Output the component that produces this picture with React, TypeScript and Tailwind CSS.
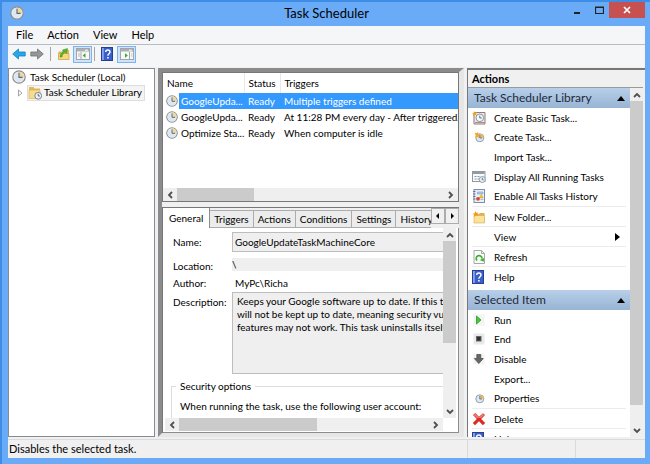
import type { ReactNode } from 'react';

type IconProps = { className?: string };

function ClockIcon({ className = 'w-3.5 h-3.5' }: IconProps) {
  return (
    <svg viewBox="0 0 14 14" className={className}>
      <circle cx="7" cy="7" r="6.2" fill="#eef1f4" stroke="#8d8d8d" strokeWidth="1.2" />
      <circle cx="7" cy="7" r="4.9" fill="#dbe7f2" />
      <path d="M7 7V2.1A4.9 4.9 0 0 1 11.9 7z" fill="#f3d694" />
      <path d="M7 2.8V7.4H10.6" fill="none" stroke="#5c6874" strokeWidth="1.1" />
    </svg>
  );
}

function SmallClockIcon({ orange = false }: { orange?: boolean }) {
  return (
    <svg viewBox="0 0 14 14" className="w-3.5 h-3.5">
      <circle cx="7.8" cy="7.8" r="4" fill="#dfe8ef" stroke="#8fa1b0" />
      <path d="M7.8 7.8V4a3.8 3.8 0 0 1 3.8 3.8z" fill="#f2b84e" />
      <path d="M7.8 5V8H10" fill="none" stroke="#54789a" strokeWidth="0.9" />
      {orange && <path d="M2.5 2.5l2 .8L6 2l.4 2 2 .6-1.7 1L7 8 5.2 6.8 3.2 7.8 3.7 5.6z" fill="#f5a623" />}
    </svg>
  );
}

function FolderIcon() {
  return (
    <svg viewBox="0 0 14 14" className="w-3.5 h-3.5 shrink-0">
      <path d="M1 1h4.5l1 1.5H12V12H1z" fill="#e3b95a" />
      <path d="M1 4h11v8.5H1z" fill="#f8dc8e" stroke="#d9ab48" strokeWidth="0.6" />
      <circle cx="10.2" cy="9.8" r="3.4" fill="#eef3f7" stroke="#6d7a86" strokeWidth="0.9" />
      <path d="M10.2 7.8v2.2H12" fill="none" stroke="#4b5d6e" strokeWidth="0.9" />
    </svg>
  );
}

function NewFolderIcon() {
  return (
    <svg viewBox="0 0 14 14" className="w-3.5 h-3.5">
      <path d="M2 4h5l1-1h4.5v10H2z" fill="#dfb04d" />
      <path d="M2 5.5h10.5V13H2z" fill="#fae39b" stroke="#d9ab48" strokeWidth="0.6" />
      <path d="M3.5 1l.8 1.8 2.2-.3-1.2 1.7.9 1.8L4 5.5 2.3 6.8l-.1-2L.5 4l2-.8z" fill="#f59a1c" />
    </svg>
  );
}

function UpFolderIcon() {
  return (
    <svg viewBox="0 0 14 14" className="w-3.5 h-3.5">
      <path d="M1.5 4.5h4l1-1.5H12v9.5H1.5z" fill="#e2b54e" />
      <path d="M1.5 6.5H12v6H1.5z" fill="#f7d77f" stroke="#c9993a" strokeWidth="0.6" />
      <path d="M3 10c.2-3 1.5-4.3 3.5-5L5.5 3l5-1.5-1 5-1-1.4C6.5 6 5.3 7.5 5 10z" fill="#4fb82c" stroke="#3a8f20" strokeWidth="0.5" />
    </svg>
  );
}

function ArrowIcon({ forward = false }: { forward?: boolean }) {
  return (
    <svg viewBox="0 0 14 12" className="w-3.5 h-3">
      {forward ? (
        <path d="M.8 4h6.7V1l5.8 5-5.8 5V8H.8z" fill="#969696" stroke="#727272" strokeWidth="0.8" />
      ) : (
        <path d="M13.2 4H6.5V1L.7 6l5.8 5V8h6.7z" fill="#27a8ea" stroke="#1b7fc0" strokeWidth="0.8" />
      )}
    </svg>
  );
}

function PaneIcon({ right = false }: { right?: boolean }) {
  return (
    <svg viewBox="0 0 14 12" className="w-3.5 h-3">
      <rect x="0.5" y="0.5" width="13" height="11" fill="#f7f7f7" stroke="#a3a6a9" />
      <path d="M1 1h12v2.5H1z" fill="#aab0b6" />
      <path d="M9 2.2h3" stroke="#fff" />
      <path d={right ? 'M9.5 4v7.5' : 'M5 4v7.5'} stroke="#a3a6a9" />
      <path d={right ? 'M11 6h1.5M11 8h1.5' : 'M2 6h2M2 8h2'} stroke="#b5babf" />
      <path d={right ? 'M5 5.3v4.4l2.8-2.2z' : 'M9.5 5.3v4.4L6.7 7.5z'} fill="#3aa535" />
    </svg>
  );
}

function HelpIcon() {
  return (
    <svg viewBox="0 0 12 14" className="w-3 h-3.5">
      <rect x="0.5" y="0.5" width="11" height="13" fill="#3a5fcd" stroke="#24408f" />
      <path d="M1 1h1.8v12H1z" fill="#8aa4ea" />
      <path d="M4.7 5c0-2.6 4.3-2.6 4.3 0 0 1.8-2.1 1.8-2.1 3.7" fill="none" stroke="#fff" strokeWidth="1.4" />
      <path d="M6.1 10h1.6v1.6H6.1z" fill="#fff" />
    </svg>
  );
}

function BasicTaskIcon() {
  return (
    <svg viewBox="0 0 14 14" className="w-3.5 h-3.5">
      <path d="M2 1.5h11V13H2z" fill="#eee9e4" stroke="#8d7f7c" />
      <path d="M3 11.5h10" stroke="#b58d83" />
      <circle cx="7.8" cy="6.8" r="3.8" fill="#f7fafc" stroke="#7f8b95" strokeWidth="0.9" />
      <path d="M7.8 4.5V7h2" fill="none" stroke="#47637b" strokeWidth="0.9" />
      <path d="M2.5 0l.7 1.6L5 1.3 4 2.9l.9 1.5-2-.4-1.4 1.2-.1-1.9L0 2.4l1.8-.5z" fill="#f5a01c" />
    </svg>
  );
}

function RunningIcon() {
  return (
    <svg viewBox="0 0 14 14" className="w-3.5 h-3.5">
      <rect x="0.5" y="1.5" width="12.5" height="10" fill="#fafafa" stroke="#93989c" />
      <path d="M1 2h11.5v2H1z" fill="#8f9ba6" />
      <path d="M2.5 6.5h2M5.5 6.5h2M2.5 9h2M5.5 9h2" stroke="#8698a8" />
      <circle cx="10.3" cy="9.5" r="3" fill="#e9f1f7" stroke="#8796a3" strokeWidth="0.9" />
      <path d="M10.3 7.8v2h1.4" fill="none" stroke="#47637b" strokeWidth="0.8" />
    </svg>
  );
}

function HistoryIcon() {
  return (
    <svg viewBox="0 0 14 14" className="w-3.5 h-3.5">
      <rect x="2" y="0.5" width="10.5" height="13" fill="#eaf0f8" stroke="#7c8db0" />
      <path d="M1 2.5h2.5M1 5h2.5M1 7.5h2.5M1 10h2.5" stroke="#5a6fa0" strokeWidth="0.9" />
      <path d="M5.5 3h5.5v2H5.5zM8.5 10.5h3" fill="#b9cbe6" stroke="#7c98c4" strokeWidth="0.6" />
      <path d="M9.3 5.5l2 3.5h-4z" fill="#f5c21c" stroke="#c9961a" strokeWidth="0.4" />
      <circle cx="6" cy="9.8" r="1.9" fill="#d9442e" />
    </svg>
  );
}

function RefreshIcon() {
  return (
    <svg viewBox="0 0 14 14" className="w-3.5 h-3.5">
      <path d="M2 .5h7.5l3 3v10H2z" fill="#fbfbfb" stroke="#a5a9ac" />
      <path d="M9.5.5v3h3" fill="none" stroke="#a5a9ac" />
      <path d="M5 10.5A2.9 2.9 0 1 1 10 8.5" fill="none" stroke="#35b027" strokeWidth="1.7" />
      <path d="M11.9 8v3.8L7.8 10z" fill="#35b027" />
    </svg>
  );
}

function RunIcon() {
  return (
    <svg viewBox="0 0 14 14" className="w-3.5 h-3.5">
      <rect x="1.5" y="1.5" width="11" height="11" fill="#f4f4f4" />
      <path d="M4.5 3L9 7l-4.5 4z" fill="#47c73a" stroke="#2c9a25" strokeWidth="0.8" />
    </svg>
  );
}

function EndIcon() {
  return (
    <svg viewBox="0 0 14 14" className="w-3.5 h-3.5">
      <rect x="1.5" y="1.5" width="11" height="11" fill="#e9e9e9" />
      <rect x="4.5" y="4.5" width="4.5" height="4.5" fill="#2e2e2e" stroke="#666" />
    </svg>
  );
}

function DisableIcon() {
  return (
    <svg viewBox="0 0 14 14" className="w-3.5 h-3.5">
      <rect x="1.5" y="1.5" width="11" height="11" fill="#f4f4f4" />
      <path d="M4.8 2.5h4v4h2.5l-4.5 5-4.5-5h2.5z" fill="#666" stroke="#484848" strokeWidth="0.7" />
    </svg>
  );
}

function DeleteIcon() {
  return (
    <svg viewBox="0 0 14 14" className="w-3.5 h-3.5">
      <path d="M1 3l2.300-2L7 4.700l4-3.500 2 1.700L9.200 7l4 4-2.400 2.200L7 9.300l-4 3.900L.8 11l4-4z" fill="#de2b22" />
      <path d="M1.5 3l1.8-1.5L7 5.300l4-3.500 1.300 1.100L9 6H5z" fill="#ec7a74" />
    </svg>
  );
}

type Action = { label: string; icon?: ReactNode; submenu?: boolean };

const libraryActions: Action[] = [
  { label: 'Create Basic Task...', icon: <BasicTaskIcon /> },
  { label: 'Create Task...', icon: <SmallClockIcon orange /> },
  { label: 'Import Task...' },
  { label: 'Display All Running Tasks', icon: <RunningIcon /> },
  { label: 'Enable All Tasks History', icon: <HistoryIcon /> },
];

const libraryExtras: Action[] = [
  { label: 'New Folder...', icon: <NewFolderIcon /> },
  { label: 'View', submenu: true },
  { label: 'Refresh', icon: <RefreshIcon /> },
  { label: 'Help', icon: <HelpIcon /> },
];

const itemActions: Action[] = [
  { label: 'Run', icon: <RunIcon /> },
  { label: 'End', icon: <EndIcon /> },
  { label: 'Disable', icon: <DisableIcon /> },
  { label: 'Export...' },
  { label: 'Properties', icon: <SmallClockIcon /> },
];

const itemExtras: Action[] = [
  { label: 'Delete', icon: <DeleteIcon /> },
  { label: 'Help', icon: <HelpIcon /> },
];

const tasks = [
  { name: 'GoogleUpda...', status: 'Ready', triggers: 'Multiple triggers defined', selected: true },
  { name: 'GoogleUpda...', status: 'Ready', triggers: 'At 11:28 PM every day - After triggered, repeat' },
  { name: 'Optimize Sta...', status: 'Ready', triggers: 'When computer is idle' },
];

const tabs = ['General', 'Triggers', 'Actions', 'Conditions', 'Settings', 'History'];

const description = `Keeps your Google software up to date. If this task
will not be kept up to date, meaning security vulnerabilities
features may not work. This task uninstalls itself`;

function Chevron({ d }: { d: string }) {
  return (
    <svg viewBox="0 0 8 8" className="w-2 h-2">
      <path d={d} fill="none" stroke="#505050" strokeWidth="1.8" />
    </svg>
  );
}

function VScroll({ thumb }: { thumb: string }) {
  return (
    <div className="flex w-[13px] shrink-0 flex-col bg-[#efefef]">
      <button aria-label="Scroll up" className="flex h-[13px] shrink-0 items-center justify-center">
        <Chevron d="M1 6l3-3 3 3" />
      </button>
      <div className="min-h-0 flex-1">
        <div className={`bg-[#cbcbcb] ${thumb}`} />
      </div>
      <button aria-label="Scroll down" className="flex h-[13px] shrink-0 items-center justify-center">
        <Chevron d="M1 2l3 3 3-3" />
      </button>
    </div>
  );
}

function HScroll({ thumb }: { thumb: string }) {
  return (
    <div className="flex h-[13px] shrink-0 bg-[#efefef]">
      <button aria-label="Scroll left" className="flex w-3.5 shrink-0 items-center justify-center">
        <Chevron d="M6 1L3 4l3 3" />
      </button>
      <div className="min-w-0 flex-1">
        <div className={`h-full bg-[#cbcbcb] ${thumb}`} />
      </div>
      <button aria-label="Scroll right" className="flex w-3.5 shrink-0 items-center justify-center">
        <Chevron d="M2 1l3 3-3 3" />
      </button>
    </div>
  );
}

function ActionRow({ action }: { action: Action }) {
  return (
    <button className="flex w-full flex-1 items-center pr-1.5 text-left leading-[14px]">
      <span className="flex w-[22px] shrink-0 items-center">{action.icon}</span>
      <span className="flex-1 whitespace-nowrap">{action.label}</span>
      {action.submenu && (
        <svg viewBox="0 0 5 8" className="w-[5px] h-2">
          <path d="M0 0l5 4-5 4z" fill="#000" />
        </svg>
      )}
    </button>
  );
}

function ActionSection({ title, main, extras }: { title: string; main: Action[]; extras: Action[] }) {
  return (
    <section className="mb-1">
      <h2 className="flex h-5 items-center justify-between bg-linear-to-b from-[#b7cfe9] to-[#98b4d4] pl-1.5 pr-[5px] text-xs text-[#1e2a3c]">
        {title}
        <svg viewBox="0 0 8 5" className="w-2 h-[5px]">
          <path d="M0 5l4-5 4 5z" fill="#000" />
        </svg>
      </h2>
      <div className="flex h-[98px] flex-col px-1">
        {main.map((a) => (
          <ActionRow key={a.label} action={a} />
        ))}
      </div>
      {extras.map((a) => (
        <div key={a.label} className="mx-1 flex h-5 border-t border-[#ececec]">
          <ActionRow action={a} />
        </div>
      ))}
    </section>
  );
}

function TaskList() {
  return (
    <div className="flex h-[130px] shrink-0 flex-col overflow-hidden border border-[#777] bg-white">
      <table className="w-full table-fixed text-left">
        <colgroup>
          <col className="w-[81px]" />
          <col className="w-9" />
          <col />
        </colgroup>
        <thead>
          <tr className="h-5">
            <th className="border-r border-[#e8e8e8] pl-1 font-normal">Name</th>
            <th className="border-r border-[#e8e8e8] pl-1 font-normal">Status</th>
            <th className="pl-1 font-normal">Triggers</th>
          </tr>
        </thead>
        <tbody className="leading-4">
          {tasks.map((t, i) => (
            <tr key={i} className={t.selected ? 'text-white' : ''}>
              <td className="p-0">
                <div className="flex items-center">
                  <span className="flex w-4 shrink-0 justify-end pr-px">
                    <ClockIcon className="w-3 h-3" />
                  </span>
                  <span className={`flex-1 whitespace-nowrap pl-0.5 ${t.selected ? 'bg-[#3399ff]' : ''}`}>{t.name}</span>
                </div>
              </td>
              <td className={`p-0 pl-1 ${t.selected ? 'bg-[#3399ff]' : ''}`}>{t.status}</td>
              <td className={`overflow-hidden whitespace-nowrap p-0 pl-1 ${t.selected ? 'bg-[#3399ff]' : ''}`}>{t.triggers}</td>
            </tr>
          ))}
        </tbody>
      </table>
      <div className="mt-auto">
        <HScroll thumb="w-[29%]" />
      </div>
    </div>
  );
}

function TabStrip() {
  return (
    <div className="flex h-5 shrink-0 items-end bg-[#f0f0f0]">
      <div role="tablist" className="flex min-w-0 flex-1 items-end overflow-hidden">
        {tabs.map((tab, i) => (
          <button
            key={tab}
            role="tab"
            aria-selected={i === 0}
            className={
              i === 0
                ? 'h-5 shrink-0 border-r border-[#8c8c8c] bg-white px-1.5'
                : 'h-[18px] shrink-0 border-y border-r border-[#acacac] bg-[#ececec] px-1'
            }
          >
            {tab}
          </button>
        ))}
      </div>
      {['M4 0v6L1 3z', 'M2 0v6l3-3z'].map((d, i) => (
        <button
          key={d}
          aria-label={i === 0 ? 'Previous tabs' : 'Next tabs'}
          className="flex h-4 w-3.5 shrink-0 items-center justify-center self-start border border-[#acacac] bg-[#f0f0f0]"
        >
          <svg viewBox="0 0 6 6" className="w-1.5 h-1.5">
            <path d={d} fill="#000" />
          </svg>
        </button>
      ))}
    </div>
  );
}

function GeneralTab() {
  return (
    <div className="flex min-h-0 flex-1 flex-col border-b border-r border-[#8c8c8c] bg-white px-0.5 pb-px">
      <div className="flex min-h-0 flex-1">
        <div className="min-w-0 flex-1 overflow-hidden pl-1.5 pt-1">
          <div className="grid grid-cols-[59px_1fr] pl-0.5">
            <label htmlFor="task-name" className="leading-5">Name:</label>
            <input
              id="task-name"
              readOnly
              defaultValue="GoogleUpdateTaskMachineCore"
              className="h-5 w-full min-w-0 border border-r-0 border-[#bdbdbd] bg-[#efefef] px-0.5"
            />
            <label htmlFor="task-location" className="pt-1.5 leading-4">Location:</label>
            <input
              id="task-location"
              readOnly
              defaultValue="\"
              className="mt-1.5 h-[13px] w-full min-w-0 bg-[#efefef]"
            />
            <label htmlFor="task-author" className="leading-[18px]">Author:</label>
            <output id="task-author" className="pl-[3px] leading-[18px]">MyPc\Richa</output>
            <label htmlFor="task-description" className="leading-5">Description:</label>
            <textarea
              id="task-description"
              readOnly
              wrap="off"
              defaultValue={description}
              className="block h-[82px] w-full min-w-0 resize-none overflow-hidden whitespace-pre border border-r-0 border-[#bdbdbd] bg-[#efefef] px-1 py-0.5 leading-[13px]"
            />
          </div>
          <fieldset className="mt-1 h-[60px] min-w-0 border border-r-0 border-[#dcdcdc] pl-2">
            <legend className="-ml-1 px-1 leading-4">Security options</legend>
            <p className="mt-1 whitespace-nowrap leading-4">When running the task, use the following user account:</p>
          </fieldset>
        </div>
        <VScroll thumb="h-[62%]" />
      </div>
      <div className="mr-[13px]">
        <HScroll thumb="w-[55%]" />
      </div>
    </div>
  );
}

export default function App() {
  return (
    <div className="flex h-screen flex-col border-l-2 border-t-2 border-[#3d8de6] bg-[#6aabf7] pb-1.5 pl-1.5 pr-[5px] font-[Lato,'Open_Sans',sans-serif] text-[10px] text-black">
      <header className="grid h-6 shrink-0 grid-cols-[1fr_auto_1fr] items-start">
        <div className="pl-0.5 pt-1">
          <ClockIcon />
        </div>
        <h1 className="text-[13px] leading-[22px]">Task Scheduler</h1>
        <div className="flex justify-end">
          <button aria-label="Minimize" className="flex h-4 w-6 items-center justify-center">
            <svg viewBox="0 0 8 8" className="w-2 h-2">
              <path d="M1 6h6v2H1z" fill="#222" />
            </svg>
          </button>
          <button aria-label="Maximize" className="flex h-4 w-5 items-center justify-center">
            <svg viewBox="0 0 9 8" className="w-[9px] h-2">
              <path d="M.5 1.5h8v6h-8zM0 1h9" fill="none" stroke="#222" strokeWidth="1.2" />
            </svg>
          </button>
          <button aria-label="Close" className="flex h-4 w-9 items-center justify-center bg-[#c75050]">
            <svg viewBox="0 0 8 8" className="w-2 h-2">
              <path d="M1 1l6 6M7 1L1 7" stroke="#fff" strokeWidth="1.7" />
            </svg>
          </button>
        </div>
      </header>

      <div className="flex min-h-0 flex-1 flex-col bg-[#f0f0f0]">
        <nav className="flex h-[19px] shrink-0 items-center gap-3.5 border-b border-[#b9bcc0] bg-[#f5f6f7] pl-2 text-[11px]">
          {['File', 'Action', 'View', 'Help'].map((m) => (
            <button key={m}>{m}</button>
          ))}
        </nav>
        <div className="flex h-[22px] shrink-0 items-center bg-[#f5f6f7] pb-1 pl-1">
          <button aria-label="Back" className="mr-1"><ArrowIcon /></button>
          <button aria-label="Forward"><ArrowIcon forward /></button>
          <span className="mx-1.5 h-3.5 w-px bg-[#a5a5a5]" />
          <button aria-label="Up one level"><UpFolderIcon /></button>
          <button aria-label="Show console tree" className="ml-0.5 flex h-[17px] w-[19px] items-center justify-center border border-[#7db4ee] bg-[#cfe4fa]">
            <PaneIcon />
          </button>
          <span className="mx-0.5 h-3.5 w-px bg-[#a5a5a5]" />
          <button aria-label="Help" className="mx-1"><HelpIcon /></button>
          <button aria-label="Show action pane" className="flex h-[17px] w-[19px] items-center justify-center border border-[#7db4ee] bg-[#cfe4fa]">
            <PaneIcon right />
          </button>
        </div>

        <main className="grid min-h-0 flex-1 grid-cols-[147px_1fr_178px] gap-x-[3px] pt-px">
          <aside className="mb-0.5 border border-[#868b96] bg-white pl-[3px]">
            <div className="flex h-4 items-center gap-1">
              <ClockIcon />
              <span className="whitespace-nowrap">Task Scheduler (Local)</span>
            </div>
            <div className="flex h-[15px] items-center pl-1.5">
              <svg viewBox="0 0 5 8" className="mr-1 w-[5px] h-2">
                <path d="M.5 1L4 4 .5 7z" fill="#fff" stroke="#9a9a9a" strokeWidth="0.9" />
              </svg>
              <span className="flex items-center gap-0.5 whitespace-nowrap border border-[#dedede] bg-[#f4f4f4] pr-0.5 leading-[13px]">
                <FolderIcon />
                Task Scheduler Library
              </span>
            </div>
          </aside>

          <section className="mb-0.5 flex min-h-0 min-w-0 flex-col border-4 border-r-5 border-b-[#e6e6e6] border-l-[#8b8b8b] border-r-[#e6e6e6] border-t-[#8b8b8b]">
            <TaskList />
            <div className="mt-[5px] flex min-h-0 flex-1 flex-col border-l border-t border-[#777]">
              <TabStrip />
              <GeneralTab />
            </div>
          </section>

          <aside className="mb-0.5 flex min-h-0 flex-col overflow-hidden border-l border-t-2 border-[#777] bg-[#f0f0f0] pr-0.5">
            <h2 className="h-[18px] shrink-0 border-b border-[#9a9a9a] pl-1 text-[11px] font-bold leading-[17px]">Actions</h2>
            <div className="flex min-h-0 flex-1">
              <div className="min-w-0 flex-1 overflow-hidden bg-white">
                <ActionSection title="Task Scheduler Library" main={libraryActions} extras={libraryExtras} />
                <ActionSection title="Selected Item" main={itemActions} extras={itemExtras} />
              </div>
              <VScroll thumb="h-[94%]" />
            </div>
          </aside>
        </main>

        <footer className="flex h-[19px] shrink-0 items-center border-t border-[#dadada] pl-px text-[11px]">
          <p className="flex-1">Disables the selected task.</p>
          <span className="h-full w-[108px] border-l border-[#dadada]" />
          <span className="h-full w-[70px] border-l border-[#dadada]" />
        </footer>
      </div>
    </div>
  );
}
